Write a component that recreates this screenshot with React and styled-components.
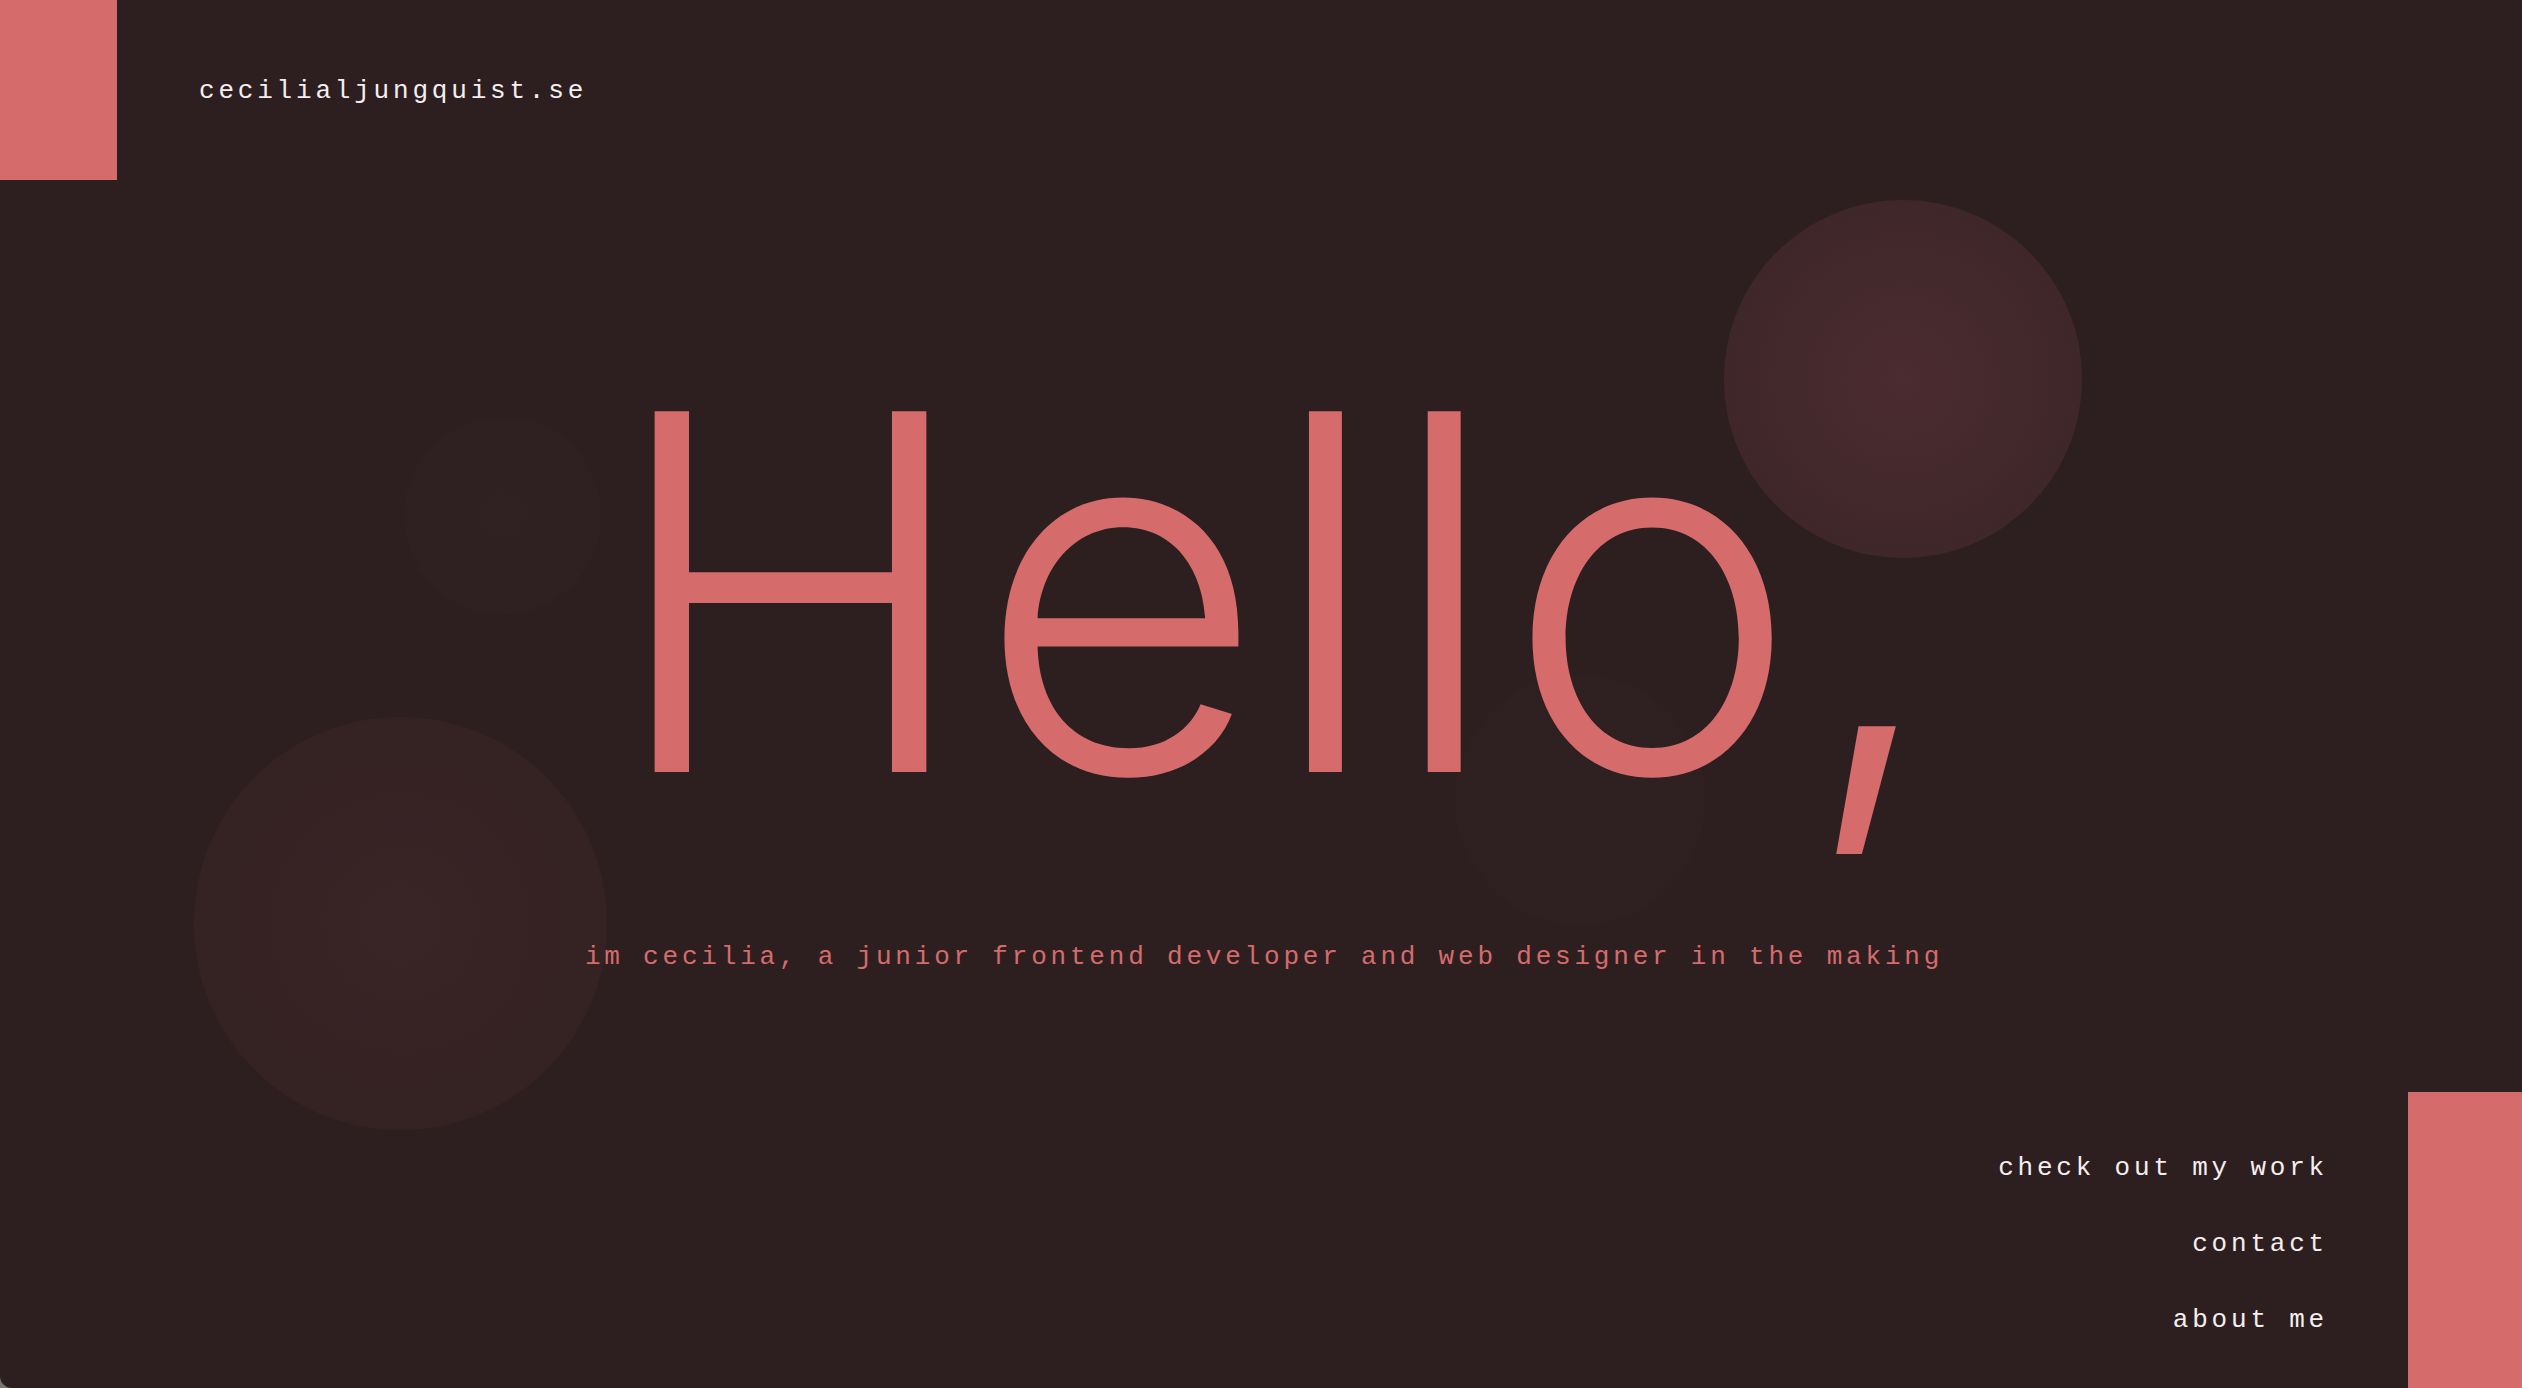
import styled, { createGlobalStyle } from "styled-components";

const GlobalStyle = createGlobalStyle`
  html, body {
    margin: 0;
    padding: 0;
    background: #77776e;
  }
  body {
    font-family: "Liberation Mono", "DejaVu Sans Mono", monospace;
  }
`;

const Page = styled.div`
  position: relative;
  display: flex;
  flex-direction: column;
  width: 100vw;
  height: 100vh;
  overflow: hidden;
  background: #2d1f20;
  border-bottom-left-radius: 12px;
`;

const Orb = styled.div`
  position: absolute;
  z-index: 0;
  top: ${(p) => p.$y - p.$size / 2}px;
  left: ${(p) => p.$x - p.$size / 2}px;
  width: ${(p) => p.$size}px;
  height: ${(p) => p.$size}px;
  border-radius: 50%;
  background: radial-gradient(circle, ${(p) => p.$inner} 0%, ${(p) => p.$outer} 100%);
`;

const Header = styled.header`
  position: relative;
  z-index: 1;
  display: flex;
  align-items: center;
  gap: 82px;
`;

const Block = styled.div`
  width: ${(p) => p.$w}px;
  height: ${(p) => p.$h}px;
  background: #d66b6b;
  flex-shrink: 0;
`;

const Logo = styled.a`
  margin-top: 2px;
  color: #f4eeee;
  font-size: 26px;
  letter-spacing: 3.8px;
  text-decoration: none;
`;

const Main = styled.main`
  position: relative;
  z-index: 1;
  display: flex;
  flex-direction: column;
  align-items: center;
  padding-top: 164px;
`;

const Hello = styled.h1`
  margin: 0;
  padding-left: 30px;
  color: #d66b6b;
  font-family: Inter, "Noto Sans", sans-serif;
  font-weight: 285;
  font-size: 496px;
  line-height: 1;
  letter-spacing: 3px;
`;

const Intro = styled.p`
  margin: 102px 0 0;
  padding-left: 6px;
  color: #d66b6b;
  font-size: 26px;
  line-height: 30px;
  letter-spacing: 3.8px;
`;

const Footer = styled.footer`
  position: relative;
  z-index: 1;
  margin-top: auto;
  display: flex;
  justify-content: flex-end;
  align-items: flex-end;
  gap: 80px;
`;

const Nav = styled.nav`
  display: flex;
  flex-direction: column;
  align-items: flex-end;
  gap: 46px;
  padding-bottom: 53px;
`;

const NavLink = styled.a`
  color: #f4eeee;
  font-size: 26px;
  line-height: 30px;
  letter-spacing: 3.8px;
  text-decoration: none;
`;

const orbs = [
  { x: 1903, y: 379, size: 358, inner: "#4b2c30", outer: "#3a2427" },
  { x: 400, y: 923, size: 413, inner: "#392426", outer: "#332122" },
  { x: 502, y: 515, size: 197, inner: "#302122", outer: "#2e2021" },
  { x: 1580, y: 800, size: 250, inner: "#2f2021", outer: "#2e2021" },
];

export default function App() {
  return (
    <>
      <GlobalStyle />
      <Page>
        {orbs.map((o, i) => (
          <Orb
            key={i}
            $x={o.x}
            $y={o.y}
            $size={o.size}
            $inner={o.inner}
            $outer={o.outer}
          />
        ))}
        <Header>
          <Block $w={117} $h={180} />
          <Logo href="#">cecilialjungquist.se</Logo>
        </Header>
        <Main>
          <Hello>Hello,</Hello>
          <Intro>
            im cecilia, a junior frontend developer and web designer in the making
          </Intro>
        </Main>
        <Footer>
          <Nav>
            <NavLink href="#">check out my work</NavLink>
            <NavLink href="#">contact</NavLink>
            <NavLink href="#">about me</NavLink>
          </Nav>
          <Block $w={114} $h={296} />
        </Footer>
      </Page>
    </>
  );
}
